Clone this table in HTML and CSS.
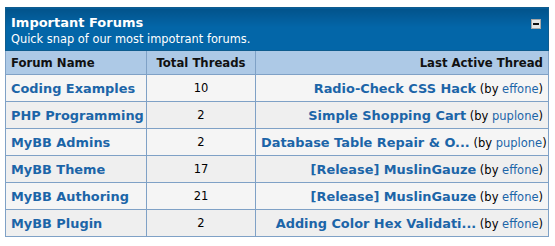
FILE: index.html
```html
<!DOCTYPE html>
<html>
<head>
<meta charset="utf-8">
<link rel="stylesheet" href="styles.css">
</head>
<body>
<table class="tborder">
  <colgroup>
    <col class="col1">
    <col class="col2">
    <col class="col3">
  </colgroup>
  <thead>
    <tr>
      <td class="thead" colspan="3">
        <div class="thead-inner">
          <div>
            <div class="title">Important Forums</div>
            <div class="subtitle">Quick snap of our most impotrant forums.</div>
          </div>
          <span class="collapse"><span class="minus"></span></span>
        </div>
      </td>
    </tr>
  </thead>
  <tbody>
    <tr class="tcat">
      <td class="c1">Forum Name</td>
      <td class="c2">Total Threads</td>
      <td class="c3">Last Active Thread</td>
    </tr>
    <tr class="trow1">
      <td class="c1"><a class="forum">Coding Examples</a></td>
      <td class="c2">10</td>
      <td class="c3"><a class="thread">Radio-Check CSS Hack</a> (by <a class="user">effone</a>)</td>
    </tr>
    <tr class="trow2">
      <td class="c1"><a class="forum">PHP Programming</a></td>
      <td class="c2">2</td>
      <td class="c3"><a class="thread">Simple Shopping Cart</a> (by <a class="user">puplone</a>)</td>
    </tr>
    <tr class="trow1">
      <td class="c1"><a class="forum">MyBB Admins</a></td>
      <td class="c2">2</td>
      <td class="c3"><a class="thread">Database Table Repair &amp; O...</a> (by <a class="user">puplone</a>)</td>
    </tr>
    <tr class="trow2">
      <td class="c1"><a class="forum">MyBB Theme</a></td>
      <td class="c2">17</td>
      <td class="c3"><a class="thread">[Release] MuslinGauze</a> (by <a class="user">effone</a>)</td>
    </tr>
    <tr class="trow1">
      <td class="c1"><a class="forum">MyBB Authoring</a></td>
      <td class="c2">21</td>
      <td class="c3"><a class="thread">[Release] MuslinGauze</a> (by <a class="user">effone</a>)</td>
    </tr>
    <tr class="trow2">
      <td class="c1"><a class="forum">MyBB Plugin</a></td>
      <td class="c2">2</td>
      <td class="c3"><a class="thread">Adding Color Hex Validati...</a> (by <a class="user">effone</a>)</td>
    </tr>
  </tbody>
</table>
</body>
</html>
```

FILE: styles.css
```css
html, body {
  margin: 0;
  padding: 0;
  background: #fff;
}
body {
  padding: 7px 0 0 5px;
  font-family: "DejaVu Sans", Verdana, sans-serif;
  font-size: 11.5px;
  color: #000;
}
.tborder {
  width: 544px;
  table-layout: fixed;
  border-collapse: collapse;
  border: 1px solid #0f5c8e;
}
.col1 { width: 141px; }
.col2 { width: 109px; }
.tborder td {
  padding: 0 5px;
  white-space: nowrap;
  overflow: hidden;
}
.thead {
  background: linear-gradient(to bottom, #02538b 0%, #0366a8 45%, #0366a8 100%);
  color: #fff;
  padding: 7px 5px 3px 5px !important;
  border-bottom: 1px solid #0f5c8e;
}
.thead-inner {
  display: flex;
  justify-content: space-between;
  align-items: flex-start;
}
.title {
  font-weight: bold;
  font-size: 13px;
  line-height: 16px;
}
.subtitle {
  font-size: 11.4px;
  line-height: 16px;
}
.collapse {
  margin-top: 4px;
  margin-right: 2px;
  width: 8px;
  height: 8px;
  background: #e6e6e6;
  border: 1px solid #a8a8a8;
  display: flex;
  align-items: center;
  justify-content: center;
}
.minus {
  width: 6px;
  height: 2px;
  background: #111;
}
.tcat td {
  background: #adc9e6;
  font-weight: bold;
  font-size: 11.7px;
  height: 23px;
  color: #111;
  border: 1px solid #7fa1c6;
}
.trow1 td {
  background: #f5f5f5;
}
.trow2 td {
  background: #efefef;
}
.trow1 td, .trow2 td {
  height: 26px;
  border: 1px solid #7fa1c6;
}
.c1 {
  text-align: left;
}
.c2 {
  text-align: center;
}
.c3 {
  text-align: right;
}
.forum, .thread {
  color: #1c65a8;
  font-weight: bold;
  font-size: 12.9px;
}
.user {
  color: #1c65a8;
}
```
